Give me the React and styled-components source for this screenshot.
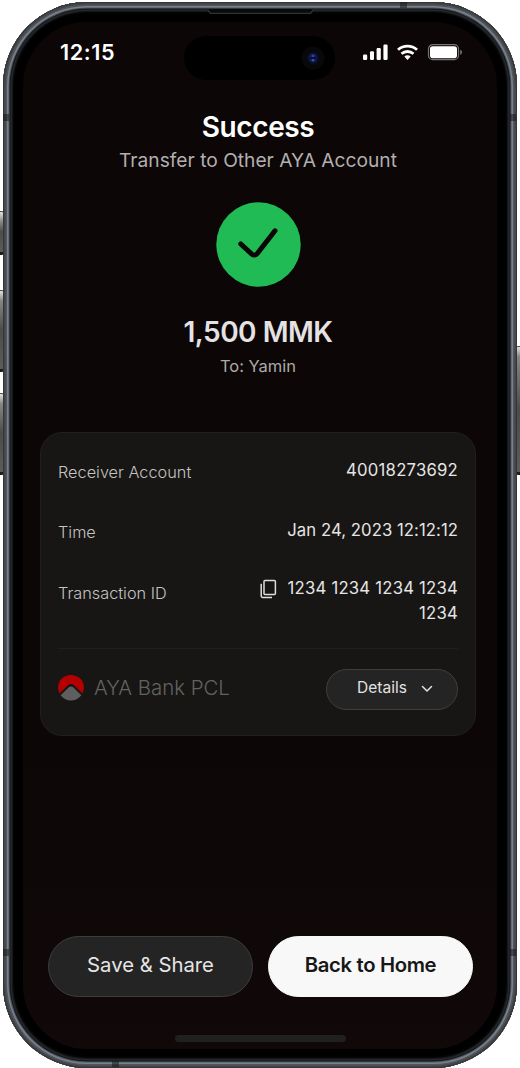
import React from "react";
import styled, { createGlobalStyle } from "styled-components";

const GlobalStyle = createGlobalStyle`
  * {
    box-sizing: border-box;
  }
  body {
    margin: 0;
    background: #ffffff;
    font-family: Inter, "Liberation Sans", sans-serif;
  }
`;

const Stage = styled.div`
  position: relative;
  width: 520px;
  height: 1068px;
  padding: 2px 3px 0;
  overflow: hidden;
`;

const SideButton = styled.div`
  position: absolute;
  top: ${(props) => props.$top}px;
  ${(props) => (props.$right ? "left: 516px" : "left: -2px")};
  width: 6px;
  height: ${(props) => props.$height}px;
  border-radius: 2px;
  border: 1px solid #4a4a4a;
  border-bottom: 3px solid #1c1c1c;
  background: linear-gradient(#e0e0e0, #858585 10px, #4c4c4c 50%, #5c5c5c);
`;

const Phone = styled.div`
  position: relative;
  width: 513.5px;
  height: 1065.5px;
  padding: 20px;
  border-radius: 84px;
  background: #000000;
  box-shadow: inset 0 0 0 1px #353637, inset 0 0 0 2.5px #434547,
    inset 0 0 0 4px #525559, inset 0 0 0 5.5px #77818f,
    inset 0 0 0 6.5px #4f565f, inset 0 0 0 7.5px #15171a,
    inset 0 0 0 9px #242628, inset 0 0 0 10px #141517,
    inset 0 0 3px 10px #101010;
`;

const Antenna = styled.div`
  position: absolute;
  left: ${(props) => props.$x}px;
  top: ${(props) => props.$y}px;
  width: ${(props) => (props.$tall ? 7 : 6)}px;
  height: ${(props) => (props.$tall ? 6 : 7)}px;
  background: rgba(20, 20, 22, 0.5);
`;

const Speaker = styled.svg`
  position: absolute;
  left: 204px;
  top: 7px;
`;

const Screen = styled.main`
  position: relative;
  display: flex;
  flex-direction: column;
  align-items: center;
  width: 473.5px;
  height: 1026.5px;
  border-radius: 64px;
  background: linear-gradient(#0c0606 65%, #100809);
  overflow: hidden;
`;

const StatusBar = styled.header`
  display: flex;
  align-items: center;
  width: 100%;
  height: 60px;
  padding: 0 33px 0 37px;
`;

const Clock = styled.div`
  width: 124.3px;
  margin-top: -1px;
  font-size: 21.6px;
  font-weight: 600;
  letter-spacing: 0.6px;
  line-height: 24px;
  color: #ffffff;
`;

const Island = styled.div`
  display: flex;
  align-items: center;
  justify-content: flex-end;
  width: 151px;
  height: 44px;
  margin-top: 12px;
  padding-right: 10.5px;
  border-radius: 22px;
  background: #000000;
`;

const StatusIcons = styled.svg`
  flex: none;
  margin: 1px 0 0 27.5px;
`;

const Receipt = styled.div`
  display: flex;
  flex-direction: column;
  align-items: center;
  margin-right: 3.5px;
`;

const Title = styled.h1`
  margin: 28px 0 0;
  font-size: 28px;
  font-weight: 600;
  letter-spacing: -0.4px;
  line-height: 34px;
  color: #ffffff;
`;

const Subtitle = styled.p`
  margin: 4px 0 0;
  font-size: 19.2px;
  line-height: 24px;
  color: #b2afae;
`;

const SuccessMark = styled.svg`
  margin: 29.5px 0 0;
`;

const Amount = styled.div`
  margin-top: 28.5px;
  font-size: 28px;
  font-weight: 600;
  letter-spacing: -0.5px;
  line-height: 34px;
  color: #e4e2e2;
`;

const Recipient = styled.div`
  margin-top: 7px;
  font-size: 16.5px;
  line-height: 20px;
  color: #acaaa9;
`;

const Card = styled.section`
  width: 436px;
  height: 304px;
  margin-top: 56px;
  padding: 25px 17px 0;
  border: 1px solid #231f1e;
  border-radius: 22px;
  background: #171614;
`;

const Row = styled.div`
  display: flex;
  justify-content: space-between;
  height: ${(props) => props.$height || 60}px;
`;

const Label = styled.span`
  padding-top: ${(props) => props.$drop || 4}px;
  font-size: 16.3px;
  font-weight: 300;
  line-height: 20px;
  color: #c4c3c1;
`;

const Value = styled.span`
  display: flex;
  align-items: flex-start;
  justify-content: flex-end;
  gap: 10px;
  width: 220px;
  text-align: right;
  font-size: 16.7px;
  letter-spacing: ${(props) => props.$tracking || 0.22}px;
  line-height: 25px;
  color: #e6e5e4;
`;

const CardFooter = styled.div`
  display: flex;
  align-items: center;
  justify-content: space-between;
  height: 82px;
  border-top: 1.5px solid #201f1d;
`;

const Bank = styled.div`
  display: flex;
  align-items: center;
  gap: 10px;
  margin-top: -4px;
  font-size: 20.4px;
  font-weight: 300;
  color: #636260;
`;

const DetailsButton = styled.button`
  display: flex;
  align-items: center;
  justify-content: center;
  gap: 13px;
  width: 132px;
  height: 41.5px;
  padding: 0 0 5px 7px;
  border: 1px solid #3e3e3e;
  border-radius: 21px;
  background: #242424;
  font-family: inherit;
  font-size: 15.5px;
  color: #e2e2e2;
`;

const Actions = styled.div`
  display: flex;
  gap: 15px;
  margin: 200px 0 0 1.5px;
`;

const ActionButton = styled.button`
  width: 205px;
  height: 61px;
  padding: 0 0 5px;
  border: 1px solid ${(props) => (props.$primary ? "#f8f8f8" : "#3d3d3d")};
  border-radius: 31px;
  background: ${(props) => (props.$primary ? "#f8f8f8" : "#242424")};
  font-family: inherit;
  font-size: 20.3px;
  font-weight: ${(props) => (props.$primary ? 600 : 400)};
  letter-spacing: ${(props) => (props.$primary ? "-0.35px" : "0")};
  color: ${(props) => (props.$primary ? "#171717" : "#e6e6e6")};
`;

const HomeIndicator = styled.div`
  width: 171px;
  height: 7px;
  margin: 38px 0 0 1px;
  border-radius: 4px;
  background: #202021;
`;

const Camera = () => (
  <svg width="24" height="24" viewBox="0 0 24 24">
    <circle cx="12" cy="12" r="11.5" fill="#08070a" />
    <circle cx="12" cy="12" r="6" fill="#0a0e2c" />
    <circle cx="12" cy="12" r="4.2" fill="#101a55" />
    <circle cx="12" cy="9.8" r="1.5" fill="#294593" />
    <circle cx="12" cy="14.2" r="1.4" fill="#20607c" />
    <path d="M8.5 12h7" stroke="#080c2b" strokeWidth="1.3" />
  </svg>
);

const Signals = () => (
  <StatusIcons width="100" height="17" viewBox="0 0 100 17">
    <g fill="#ffffff">
      <rect x="0" y="10.5" width="4.2" height="5.5" rx="1.2" />
      <rect x="7" y="7.3" width="4" height="8.7" rx="1.2" />
      <rect x="13.6" y="4" width="4.2" height="12" rx="1.2" />
      <rect x="20.4" y="0.5" width="4.2" height="15.5" rx="1.2" />
    </g>
    <g fill="none" stroke="#ffffff" strokeWidth="2.8">
      <path d="M35 5.7C40.5 .8 48.5.8 54 5.7" />
      <path d="M38.5 9.8C42 6.7 47 6.7 50.5 9.8" />
    </g>
    <path d="M41.3 12.5C43.2 10.9 45.8 10.9 47.7 12.5L44.5 15.9Z" fill="#ffffff" />
    <rect x="65.5" y=".7" width="30" height="15" rx="4.3" fill="none" stroke="#777474" strokeWidth="1.2" />
    <rect x="67" y="2.2" width="27" height="12" rx="2.8" fill="#ffffff" />
    <path d="M97.2 5.7C99.6 6.7 99.6 9.8 97.2 10.8Z" fill="#777474" />
  </StatusIcons>
);

const CopySvg = styled.svg`
  flex: none;
  margin-top: 2.5px;
`;

const CopyIcon = () => (
  <CopySvg width="18" height="20" viewBox="0 0 18 20" fill="none" stroke="#dfdedd" strokeWidth="1.5">
    <rect x="4" y="1.5" width="11.4" height="14" rx="1" />
    <path d="M1.2 4.8V17Q1.2 18.4 2.6 18.4H12" />
  </CopySvg>
);

const BankLogo = () => (
  <svg width="26" height="26" viewBox="0 0 26 26">
    <path
      d="M1.5 18.6C-1 13-.2 7.2 3.8 3.6C9-1.2 17-1.2 22.2 3.6C26.2 7.2 27 13 24.5 18.6L16 10.3Q13 7.7 10 10.3Z"
      fill="#b40000"
    />
    <path d="M2.6 20.2L10.6 12.5Q13 10.4 15.4 12.5L23.4 20.2C18 27.2 8 27.2 2.6 20.2Z" fill="#5e5e5e" />
  </svg>
);

const App = () => {
  return (
    <>
      <GlobalStyle />
      <Stage>
        <SideButton $top={211} $height={44} />
        <SideButton $top={290} $height={82} />
        <SideButton $top={393} $height={82} />
        <SideButton $top={346} $height={129} $right />
        <Phone>
          <Antenna $x={397} $y={0} $tall />
          <Antenna $x={109} $y={1059} $tall />
          <Antenna $x={0} $y={112} />
          <Antenna $x={507} $y={112} />
          <Antenna $x={0} $y={947} />
          <Antenna $x={507} $y={947} />
          <Speaker width="107" height="6" viewBox="0 0 107 6">
            <path d="M0 0H107L103.5 4.3H3.5Z" fill="#0a0a0a" />
            <path d="M.5 .5L3.5 4.3H103.5L106.5 .5" fill="none" stroke="#303233" strokeWidth="1.3" />
          </Speaker>
          <Screen>
            <StatusBar>
              <Clock>12:15</Clock>
              <Island>
                <Camera />
              </Island>
              <Signals />
            </StatusBar>
            <Receipt>
              <Title>Success</Title>
              <Subtitle>Transfer to Other AYA Account</Subtitle>
              <SuccessMark width="85" height="85" viewBox="0 0 85 85">
                <circle cx="42.5" cy="42.5" r="42.2" fill="#20bb55" />
                <path
                  d="M24.8 42L35.5 51.8Q38.8 54.6 41.5 51.2L59 28.8"
                  fill="none"
                  stroke="#0c0606"
                  strokeWidth="5"
                  strokeLinecap="round"
                />
              </SuccessMark>
              <Amount>1,500 MMK</Amount>
              <Recipient>To: Yamin</Recipient>
              <Card>
                <Row>
                  <Label>Receiver Account</Label>
                  <Value>40018273692</Value>
                </Row>
                <Row $height={58}>
                  <Label>Time</Label>
                  <Value $tracking={0.06}>Jan 24, 2023 12:12:12</Value>
                </Row>
                <Row $height={72}>
                  <Label $drop={7}>Transaction ID</Label>
                  <Value>
                    <CopyIcon />
                    <span>
                      1234 1234 1234 1234
                      <br />
                      1234
                    </span>
                  </Value>
                </Row>
                <CardFooter>
                  <Bank>
                    <BankLogo />
                    AYA Bank PCL
                  </Bank>
                  <DetailsButton>
                    Details
                    <svg width="14" height="14" viewBox="0 0 14 14" fill="none" stroke="#e2e2e2" strokeWidth="1.5">
                      <path d="M2.5 6.5L7 11L11.5 6.5" strokeLinecap="round" strokeLinejoin="round" />
                    </svg>
                  </DetailsButton>
                </CardFooter>
              </Card>
            </Receipt>
            <Actions>
              <ActionButton>Save &amp; Share</ActionButton>
              <ActionButton $primary>Back to Home</ActionButton>
            </Actions>
            <HomeIndicator />
          </Screen>
        </Phone>
      </Stage>
    </>
  );
};

export default App;
